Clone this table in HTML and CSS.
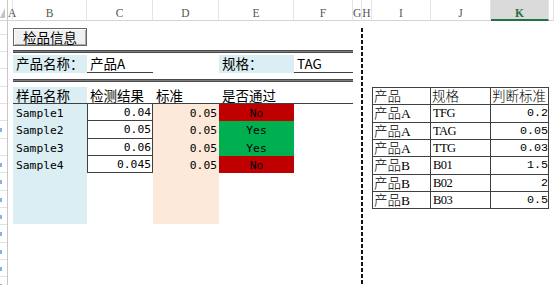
FILE: index.html
```html
<!DOCTYPE html>
<html lang="zh-CN">
<head>
<meta charset="utf-8">
<title>检品信息</title>
<link rel="stylesheet" href="styles.css">
</head>
<body>
<div class="sheet">
  <!-- column letters -->
  <div class="ch corner"><span class="tri"></span></div>
  <div class="ch">A</div>
  <div class="ch">B</div>
  <div class="ch">C</div>
  <div class="ch">D</div>
  <div class="ch">E</div>
  <div class="ch">F</div>
  <div class="ch">G</div>
  <div class="ch">H</div>
  <div class="ch">I</div>
  <div class="ch">J</div>
  <div class="ch sel">K</div>
  <div class="ch"></div>

  <!-- row number strip (scrolled, numbers mostly hidden) -->
  <div class="rowheads">
    <div class="rh top"></div>
    <div class="rh"></div>
    <div class="rh"></div>
    <div class="rh"></div>
    <div class="rh"></div>
    <div class="rh"></div>
    <div class="rh cut"></div>
    <div class="rh"></div>
    <div class="rh cut"></div>
    <div class="rh cut"></div>
    <div class="rh cut"></div>
    <div class="rh cut"></div>
    <div class="rh cut"></div>
    <div class="rh cut"></div>
    <div class="rh cut"></div>
    <div class="rh cut"></div>
  </div>

  <!-- inspection form -->
  <div class="form">
    <button class="btn" type="button">检品信息</button>
    <div class="rule first"></div>
    <div class="prod">
      <div class="lbl">产品名称：</div>
      <div class="val">产品A</div>
      <div></div>
      <div class="lbl">规格：</div>
      <div class="val">TAG</div>
    </div>
    <div class="rule second"></div>
    <div class="samples">
      <div class="hd b">样品名称</div>
      <div class="hd">检测结果</div>
      <div class="hd">标准</div>
      <div class="hd">是否通过</div>
      <div class="hd"></div>

      <div class="name b">Sample1</div>
      <div class="res">0.04</div>
      <div class="std">0.05</div>
      <div class="pass no">No</div>
      <div></div>

      <div class="name b">Sample2</div>
      <div class="res">0.05</div>
      <div class="std">0.05</div>
      <div class="pass yes">Yes</div>
      <div></div>

      <div class="name b">Sample3</div>
      <div class="res">0.06</div>
      <div class="std">0.05</div>
      <div class="pass yes">Yes</div>
      <div></div>

      <div class="name b">Sample4</div>
      <div class="res">0.045</div>
      <div class="std">0.05</div>
      <div class="pass no">No</div>
      <div></div>

      <div class="b"></div>
      <div></div>
      <div class="std"></div>
      <div></div>
      <div></div>
    </div>
  </div>

  <div class="pagebreak"></div>

  <!-- standards lookup -->
  <div class="lookup">
    <div class="lc">产品</div><div class="lc">规格</div><div class="lc">判断标准</div>
    <div class="lc">产品A</div><div class="lc code">TFG</div><div class="lc num">0.2</div>
    <div class="lc">产品A</div><div class="lc code">TAG</div><div class="lc num">0.05</div>
    <div class="lc">产品A</div><div class="lc code">TTG</div><div class="lc num">0.03</div>
    <div class="lc">产品B</div><div class="lc code">B01</div><div class="lc num">1.5</div>
    <div class="lc">产品B</div><div class="lc code">B02</div><div class="lc num">2</div>
    <div class="lc">产品B</div><div class="lc code">B03</div><div class="lc num">0.5</div>
  </div>
</div>
</body>
</html>
```

FILE: styles.css
```css
* { box-sizing: border-box; }

html, body {
  margin: 0;
  padding: 0;
  background: #fff;
}

body {
  font-family: "Noto Sans CJK SC", "Liberation Sans", sans-serif;
  color: #000;
}

.sheet {
  display: grid;
  grid-template-columns: 8px 5px 74px 66px 66px 75px 59px 9px 10px 59px 60px 58px 1fr;
  grid-template-rows: 21px 1fr;
  width: 554px;
  height: 285px;
  overflow: hidden;
}

/* column header bar */
.ch {
  height: 21px;
  padding-top: 5px;
  line-height: 16px;
  border-right: 1px solid #e4e4e4;
  border-bottom: 1px solid #d4d4d4;
  font-family: "Liberation Serif", serif;
  font-size: 11.5px;
  color: #555;
  text-align: center;
  white-space: nowrap;
}

.ch.corner {
  display: flex;
  justify-content: flex-end;
  align-items: flex-end;
  padding: 0 2px 2px 0;
  border-right-color: #c6c6c6;
}

.tri {
  width: 6px;
  height: 10px;
  background: #c4c4c4;
  clip-path: polygon(100% 0, 100% 100%, 0 100%);
}

.ch.sel {
  background: #dadada;
  border-bottom: 2px solid #217346;
  color: #217346;
  font-weight: bold;
}

/* row number strip */
.rowheads {
  grid-column: 1;
  grid-row: 2;
  display: flex;
  flex-direction: column;
  border-right: 1px solid #c6c6c6;
}

.rh {
  flex: 0 0 17.33px;
  border-bottom: 1px solid #e2e2e2;
}

.rh.top { flex-basis: 13.67px; }

.rh.cut::before {
  content: "";
  display: block;
  width: 2px;
  height: 4px;
  margin-top: 7px;
  background: #8db0de;
}

/* form block, columns B..F */
.form {
  grid-column: 3 / 8;
  grid-row: 2;
  display: flex;
  flex-direction: column;
  padding-top: 7px;
}

.btn {
  align-self: flex-start;
  width: 74px;
  height: 18px;
  margin: 0;
  padding: 0;
  border: 1px solid #666;
  background: #f0f0f0;
  box-shadow: inset 1px 1px #fff, inset -1px -1px #a8a8a8;
  font-family: "Noto Sans CJK SC", sans-serif;
  font-size: 13.5px;
  line-height: 15px;
  color: #000;
}

/* heavy double rule drawn as a 3px band */
.rule {
  height: 3px;
  background: linear-gradient(to bottom, #4a4a4a 0 1px, #7d7d7d 1px 2px, #4a4a4a 2px 3px);
}

.rule.first { margin-top: 4px; }
.rule.second { margin-top: 7px; }

.prod {
  margin-top: 2px;
  display: grid;
  grid-template-columns: 74px 66px 66px 75px 59px;
  height: 17px;
  font-size: 13.5px;
  line-height: 17px;
}

.prod .lbl {
  background: #daeef3;
  padding-left: 3px;
  white-space: nowrap;
}

.prod .val {
  padding-left: 3px;
  border-bottom: 1px solid #404040;
}

.samples {
  margin-top: 5px;
  display: grid;
  grid-template-columns: 74px 66px 66px 75px 59px;
  grid-template-rows: 17px repeat(4, 17.33px) 51px;
}

.b { background: #daeef3; }

.hd {
  padding-left: 3px;
  font-size: 13.5px;
  line-height: 17px;
  border-bottom: 1px solid #404040;
  white-space: nowrap;
}

.name, .res, .std, .pass {
  font-family: "DejaVu Sans Mono", monospace;
  font-size: 11.3px;
  line-height: 17.33px;
  padding-top: 1px;
  white-space: nowrap;
}

.name { padding-left: 3px; }

.res {
  text-align: right;
  padding-right: 1px;
  border: 1px solid #404040;
  border-top: 0;
  line-height: 16.33px;
}

.std {
  background: #fde9d9;
  text-align: right;
  padding-right: 2px;
}

.pass { text-align: center; }
.pass.no { background: #c00000; }
.pass.yes { background: #00b050; }

/* page break marker between G and H */
.pagebreak {
  grid-column: 9;
  grid-row: 2;
  width: 2px;
  margin: 7px 0 0 -1px;
  background: repeating-linear-gradient(to bottom, #111 0 4px, transparent 4px 6px);
}

/* lookup table, columns I..K */
.lookup {
  grid-column: 10 / 13;
  grid-row: 2;
  align-self: start;
  margin-top: 66px;
  display: grid;
  grid-template-columns: 58px 60px 58px;
  grid-auto-rows: 17.33px;
  border-top: 1px solid #404040;
  border-left: 1px solid #404040;
  font-family: "Liberation Serif", "Noto Sans CJK SC", serif;
  font-size: 13.5px;
  font-weight: 300;
}

.lc {
  border-right: 1px solid #404040;
  border-bottom: 1px solid #404040;
  padding-left: 1px;
  padding-top: 1px;
  line-height: 15.33px;
  white-space: nowrap;
  overflow: hidden;
}

.lc.code {
  font-size: 12.5px;
  letter-spacing: -0.6px;
  padding-left: 2px;
}

.lc.num {
  font-family: "Liberation Mono", monospace;
  font-size: 11.7px;
  text-align: right;
  padding-right: 0;
}
```
